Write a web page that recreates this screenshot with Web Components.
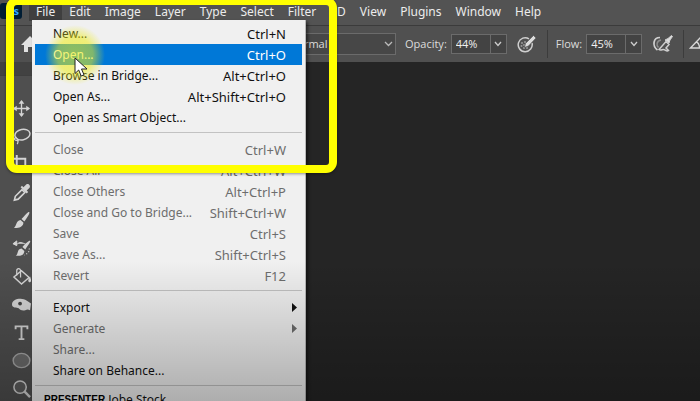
<!DOCTYPE html>
<html lang="en">
<head>
<meta charset="utf-8">
<title>File menu</title>
<style>
  html, body { margin: 0; height: 100%; overflow: hidden; }
  body { background: #252525; font-family: "Open Sans", "Noto Sans", sans-serif; }
</style>
</head>
<body>
<photo-editor>
  <menu-bar slot="menubar"></menu-bar>
  <options-bar slot="options"></options-bar>
  <tool-box slot="tools"></tool-box>
  <file-menu slot="overlay"></file-menu>
  <bottom-shade slot="overlay"></bottom-shade>
  <highlight-frame slot="overlay"></highlight-frame>
  <mouse-pointer slot="overlay"></mouse-pointer>
</photo-editor>

<script>
// Attaches an open shadow root with the element's styles and markup
class BaseElement extends HTMLElement {
  constructor() {
    super();
    this.attachShadow({ mode: 'open' });
  }

  connectedCallback() {
    this.shadowRoot.innerHTML = this.render();
  }
}

class PhotoEditor extends BaseElement {
  render() {
    return `
      <style>
        :host {
          position: relative;
          display: flex;
          flex-direction: column;
          height: 100vh;
          overflow: hidden;
          background: #252525;
        }
        .work { flex: 1; display: flex; min-height: 0; }
        .canvas { flex: 1; background: #252525; }
      </style>
      <slot name="menubar"></slot>
      <slot name="options"></slot>
      <div class="work">
        <slot name="tools"></slot>
        <main class="canvas"></main>
      </div>
      <slot name="overlay"></slot>
    `;
  }
}

class MenuBar extends BaseElement {
  render() {
    const names = ['File', 'Edit', 'Image', 'Layer', 'Type', 'Select', 'Filter', '3D', 'View', 'Plugins', 'Window', 'Help'];
    return `
      <style>
        :host {
          display: flex;
          align-items: flex-start;
          height: 25px;
          background: #535353;
          border-bottom: 1px solid #3b3b3b;
          overflow: hidden;
        }
        .logo {
          width: 22px;
          height: 16px;
          margin: 3px 7px 0 0;
          border-radius: 3px;
          background: #001d34;
          color: #31a8ff;
          font-size: 11px;
          font-weight: 700;
          line-height: 15px;
          text-align: right;
          box-sizing: border-box;
          padding-right: 3px;
        }
        nav { display: flex; }
        button {
          height: 21px;
          padding: 2px 7px 0;
          border: 0;
          background: none;
          color: #ececec;
          font: 12px/20px "Noto Sans", sans-serif;
          white-space: nowrap;
        }
        button[aria-expanded] { background: #3f3f3f; }
      </style>
      <div class="logo">Ps</div>
      <nav>
        ${names.map((n, i) => `<button type="button"${i === 0 ? ' aria-expanded="true"' : ''}>${n}</button>`).join('')}
      </nav>
    `;
  }
}

class PercentField extends BaseElement {
  render() {
    return `
      <style>
        :host { display: flex; align-items: center; gap: 4px; }
        label { color: #dcdcdc; font-size: 11px; line-height: 16px; }
        .box {
          display: flex;
          height: 18px;
          width: 54px;
          border: 1px solid #6b6b6b;
          background: #434343;
        }
        input {
          width: 38px;
          box-sizing: border-box;
          border: 0;
          padding: 0 0 0 4px;
          background: none;
          color: #f0f0f0;
          font: 11px/16px "Open Sans", sans-serif;
        }
        button {
          flex: 1;
          display: grid;
          place-items: center;
          padding: 0;
          border: 0;
          border-left: 1px solid #6b6b6b;
          background: none;
        }
        svg { display: block; }
      </style>
      <label for="value">${this.getAttribute('label')}:</label>
      <div class="box">
        <input id="value" type="text" value="${this.getAttribute('value')}">
        <button type="button" aria-label="Show slider">
          <svg width="8" height="6" viewBox="0 0 8 6"><path d="M1 1l3 3.5L7 1" fill="none" stroke="#ccc" stroke-width="1.3"/></svg>
        </button>
      </div>
    `;
  }
}

class OptionsBar extends BaseElement {
  render() {
    return `
      <style>
        :host {
          display: flex;
          align-items: center;
          height: 36px;
          box-sizing: border-box;
          padding-left: 20px;
          background: #505050;
          overflow: hidden;
          white-space: nowrap;
        }
        svg { display: block; flex: none; }
        .spacer { flex: none; width: 240px; }
        .mode {
          flex: none;
          display: flex;
          align-items: center;
          position: relative;
          margin-right: 9px;
        }
        select {
          appearance: none;
          width: 116px;
          height: 22px;
          padding: 0 0 0 8px;
          border: 1px solid #6b6b6b;
          border-radius: 0;
          background: #474747;
          color: #dcdcdc;
          font: 11px/20px "Open Sans", sans-serif;
        }
        .mode svg { position: absolute; right: 3px; pointer-events: none; }
        .icon { display: block; margin: 0 10px; padding: 0; border: 0; background: none; }
        .sep { flex: none; width: 1px; height: 28px; background: #3c3c3c; }
        .before-field { margin-right: 8px; }
        .angle { margin-left: 5px; }
      </style>
      <svg width="20" height="18" viewBox="0 0 20 18"><path d="M1 10L10 1l9 9h-3v7h-4v-5H8v5H4v-7z" fill="#e2e2e2"/></svg>
      <div class="spacer"></div>
      <div class="mode">
        <select aria-label="Mode"><option>Normal</option></select>
        <svg width="9" height="6" viewBox="0 0 9 6"><path d="M1 1l3.5 3.5L8 1" fill="none" stroke="#bbb" stroke-width="1.3"/></svg>
      </div>
      <percent-field label="Opacity" value="44%"></percent-field>
      <button class="icon" type="button" aria-label="Pressure for opacity">
        <svg width="20" height="20" viewBox="0 0 20 20" fill="none" stroke="#cfcfcf">
          <path d="M12 4.800A7 7 0 1 0 15 9" stroke-width="1.500"/>
          <g fill="#999" stroke="none"><circle cx="5" cy="9" r="1"/><circle cx="8" cy="8" r="1"/><circle cx="4.500" cy="12" r="1"/><circle cx="7" cy="11" r="1"/><circle cx="7" cy="14" r="1"/><circle cx="10" cy="14" r="1"/></g>
          <path d="M7.500 13.500l1-4L16.500 1.500l2.500 2.500L11.500 12z" fill="#dcdcdc" stroke="#505050" stroke-width=".6"/>
        </svg>
      </button>
      <div class="sep before-field"></div>
      <percent-field label="Flow" value="45%"></percent-field>
      <button class="icon" type="button" aria-label="Airbrush">
        <svg width="21" height="18" viewBox="0 0 21 18" fill="none" stroke="#cfcfcf">
          <path d="M8 2.500C1 2.500 0 11 5.500 15" stroke-width="1.700"/>
          <path d="M9 5C4.500 6 4 10 6.500 12.500" stroke="#8c8c8c" stroke-width="1.500"/>
          <path d="M7 14.500l7-8 3 3-3 3.500 2.500 2.500c-2 1.500-3.500-1-5-1s-3 1.500-4.500 0z" stroke-width="1.500"/>
          <path d="M13 5l3-1.500 3.500-3 1 1-2.500 3.500-1 3z" fill="#ddd"/>
        </svg>
      </button>
      <div class="sep"></div>
      <svg class="angle" width="18" height="16" viewBox="0 0 18 16"><path d="M12 1L1.500 12H17M7.500 6c2 1 3 3.500 3 6" fill="none" stroke="#d6d6d6" stroke-width="1.400"/></svg>
    `;
  }
}

class ToolBox extends BaseElement {
  render() {
    const tools = [
      ['Move', '<path d="M10 2v16M2 10h16" stroke-width="1.400"/><path d="M10 1l3 4H7zM10 19l3-4H7zM1 10l4-3v6zM19 10l-4-3v6z" fill="#d4d4d4" stroke="none"/>'],
      ['Lasso', '<ellipse cx="11" cy="8" rx="8" ry="5.500" transform="rotate(-12 11 8)" stroke-width="1.500"/><path d="M5 11c-3 0-3 3-.5 3s2 2 1 4M5 12l2 3" stroke-width="1.300"/>'],
      ['Crop', '<path d="M1 4h13v14M5 0v14h13" stroke-width="2"/>'],
      ['Eyedropper', '<path d="M2.500 18l1-4 7-7 3 3-7 7z" stroke-width="1.700"/><path d="M9 4.500l6.500 6.500 1.500-1.500-1.500-1.500 3-3c1.500-2.500-1.500-5-3.500-3.500l-3 3-1.500-1.500z" fill="#d4d4d4" stroke="none"/>'],
      ['Brush', '<path d="M18 1c1 .5 0 3-5 10l-3-2.500C15 3 17 .5 18 1zM9 9.500l3 2.700c0 4-4 6.500-10 5.300 3-1.500 2-7.500 7-8z" fill="#d4d4d4" stroke="none"/>'],
      ['History brush', '<path d="M2 5h4c3-3 6 0 8 0M1 5l4-3v5z" fill="#d4d4d4" stroke-width="1"/><path d="M19 2c1 .5-1 3-5 9l-3-2.500C15 4 18 1.500 19 2zM10 10l3 2.500c0 4-4 6-9 5 3-1.500 1-7 6-7.500z" fill="#d4d4d4" stroke="none"/><path d="M18 10c1 3-2 6-5 7" stroke-width="1.200" stroke-dasharray="1 2"/>'],
      ['Paint bucket', '<path d="M10 4l8 7-8 7-8-7.500z" stroke-width="1.500"/><path d="M9 11V4c0-3-4-3-4 0v5" stroke-width="1.300"/><path d="M19 10c1 3 2 5 0 6-3 0-2-3 0-6z" fill="#d4d4d4" stroke="none"/>'],
      ['Sponge', '<path d="M0 10c0-4 4-6 9-6 5 0 8 3 11 5l-1 7c-2-1-3-1-5 0-3 1-5 0-7-2-2-1-7 0-7-4z" fill="#d4d4d4" stroke="none"/><circle cx="8.500" cy="9" r="2" fill="#444" stroke="none"/>'],
      ['Type', '<path d="M3.800 6.500V3.500h12.400v3M10 3.500v13M7 17h6" stroke-width="2"/>'],
      ['Ellipse', '<ellipse cx="10" cy="10" rx="8.800" ry="7.500" fill="#6c6c6c" stroke="#a8a8a8" stroke-width="1.500"/>'],
      ['Zoom', '<circle cx="8.500" cy="8.500" r="6.500" stroke-width="1.600" fill="#5d5d5d"/><path d="M13 13l6 6" stroke-width="2.500"/>']
    ];
    return `
      <style>
        :host {
          flex: none;
          width: 42px;
          background: #4f4f4f;
        }
        .grip {
          height: 13px;
          border-bottom: 1px solid #3f3f3f;
          background: #424242;
          margin-bottom: 18px;
        }
        button {
          display: grid;
          place-items: center;
          width: 42px;
          height: 28px;
          padding: 0;
          border: 0;
          background: none;
        }
        svg { display: block; }
      </style>
      <div class="grip"></div>
      ${tools.map(([name, shape]) => `
        <button type="button" aria-label="${name}">
          <svg width="19" height="19" viewBox="0 0 20 20" fill="none" stroke="#d4d4d4">${shape}</svg>
        </button>`).join('')}
    `;
  }
}

class FileMenu extends BaseElement {
  render() {
    const groups = [
      [['New...', 'Ctrl+N'], ['Open...', 'Ctrl+O', 'active'], ['Browse in Bridge...', 'Alt+Ctrl+O'], ['Open As...', 'Alt+Shift+Ctrl+O'], ['Open as Smart Object...', '']],
      [['Close', 'Ctrl+W', 'off'], ['Close All', 'Alt+Ctrl+W', 'off'], ['Close Others', 'Alt+Ctrl+P', 'off'], ['Close and Go to Bridge...', 'Shift+Ctrl+W', 'off'], ['Save', 'Ctrl+S', 'off'], ['Save As...', 'Shift+Ctrl+S', 'off'], ['Revert', 'F12', 'off']],
      [['Export', '>'], ['Generate', '>', 'off'], ['Share...', '', 'off'], ['Share on Behance...', '']]
    ];
    const arrow = '<svg width="5" height="9" viewBox="0 0 5 9"><path d="M0 0l5 4.500L0 9z" fill="currentColor"/></svg>';
    const item = ([name, key, state = '']) => `
      <button type="button" role="menuitem" class="${state}"${state === 'off' ? ' disabled' : ''}>
        <span>${name}</span>${key === '>' ? arrow : `<kbd>${key}</kbd>`}
      </button>`;
    return `
      <style>
        :host {
          position: absolute;
          left: 32px;
          top: 20px;
          width: 274px;
          box-sizing: border-box;
          padding: 3px;
          background: #f0f0f0;
          border-right: 1px solid #b8b8b8;
          box-shadow: 2px 2px 3px rgba(0, 0, 0, .5);
        }
        button {
          display: flex;
          align-items: center;
          justify-content: space-between;
          width: 100%;
          height: 21px;
          padding: 0 16px 0 18px;
          border: 0;
          background: none;
          color: #111;
          font: 12px/20px "Noto Sans", sans-serif;
          white-space: nowrap;
        }
        kbd { font-family: inherit; font-size: 13px; }
        svg { margin-right: -11px; }
        .off { color: #6d6d6d; }
        .active { background: #0078d7; color: #fff; }
        hr {
          height: 1px;
          margin: 4px 0 6px;
          border: 0;
          background: #c2c2c2;
        }
        .last { display: flex; align-items: center; padding-left: 9px; }
        .last button { width: auto; height: 16px; padding: 0 0 0 3px; line-height: 16px; }
        .caption { color: #000; font: 700 10px/16px "Liberation Sans", sans-serif; }
      </style>
      ${groups.map((g) => `<div role="group">${g.map(item).join('')}</div>`).join('<hr>')}
      <hr>
      <div class="last">
        <span class="caption">PRESENTER</span>
        <button type="button" role="menuitem">Jobe Stock</button>
      </div>
    `;
  }
}

class BottomShade extends BaseElement {
  render() {
    return `
      <style>
        :host {
          position: absolute;
          inset: auto 0 0 0;
          height: 140px;
          background: linear-gradient(rgba(0, 0, 0, 0), rgba(0, 0, 0, .28));
          pointer-events: none;
        }
      </style>
    `;
  }
}

class HighlightFrame extends BaseElement {
  render() {
    return `
      <style>
        :host {
          position: absolute;
          left: 6px;
          top: -3px;
          width: 331px;
          height: 176px;
          box-sizing: border-box;
          border: 8px solid #ff0;
          border-radius: 11px;
          box-shadow: 0 1px 3px rgba(0, 0, 0, .4);
          pointer-events: none;
        }
      </style>
    `;
  }
}

class MousePointer extends BaseElement {
  render() {
    return `
      <style>
        :host { position: absolute; left: 45px; top: 25px; pointer-events: none; }
        .glow {
          width: 60px;
          height: 60px;
          border-radius: 50%;
          background: radial-gradient(circle closest-side, rgba(236, 236, 20, .62) 0, rgba(236, 236, 20, .54) 60%, rgba(236, 236, 20, 0) 100%);
        }
        svg { position: absolute; left: 29px; top: 32px; }
      </style>
      <div class="glow"></div>
      <svg width="15" height="21" viewBox="0 0 15 21"><path d="M1 1v15.500l3.700-3.500 2.500 6 2.800-1.200-2.500-5.800H13z" fill="#fff" stroke="#222" stroke-width="1"/></svg>
    `;
  }
}

customElements.define('photo-editor', PhotoEditor);
customElements.define('menu-bar', MenuBar);
customElements.define('percent-field', PercentField);
customElements.define('options-bar', OptionsBar);
customElements.define('tool-box', ToolBox);
customElements.define('file-menu', FileMenu);
customElements.define('bottom-shade', BottomShade);
customElements.define('highlight-frame', HighlightFrame);
customElements.define('mouse-pointer', MousePointer);
</script>
</body>
</html>
